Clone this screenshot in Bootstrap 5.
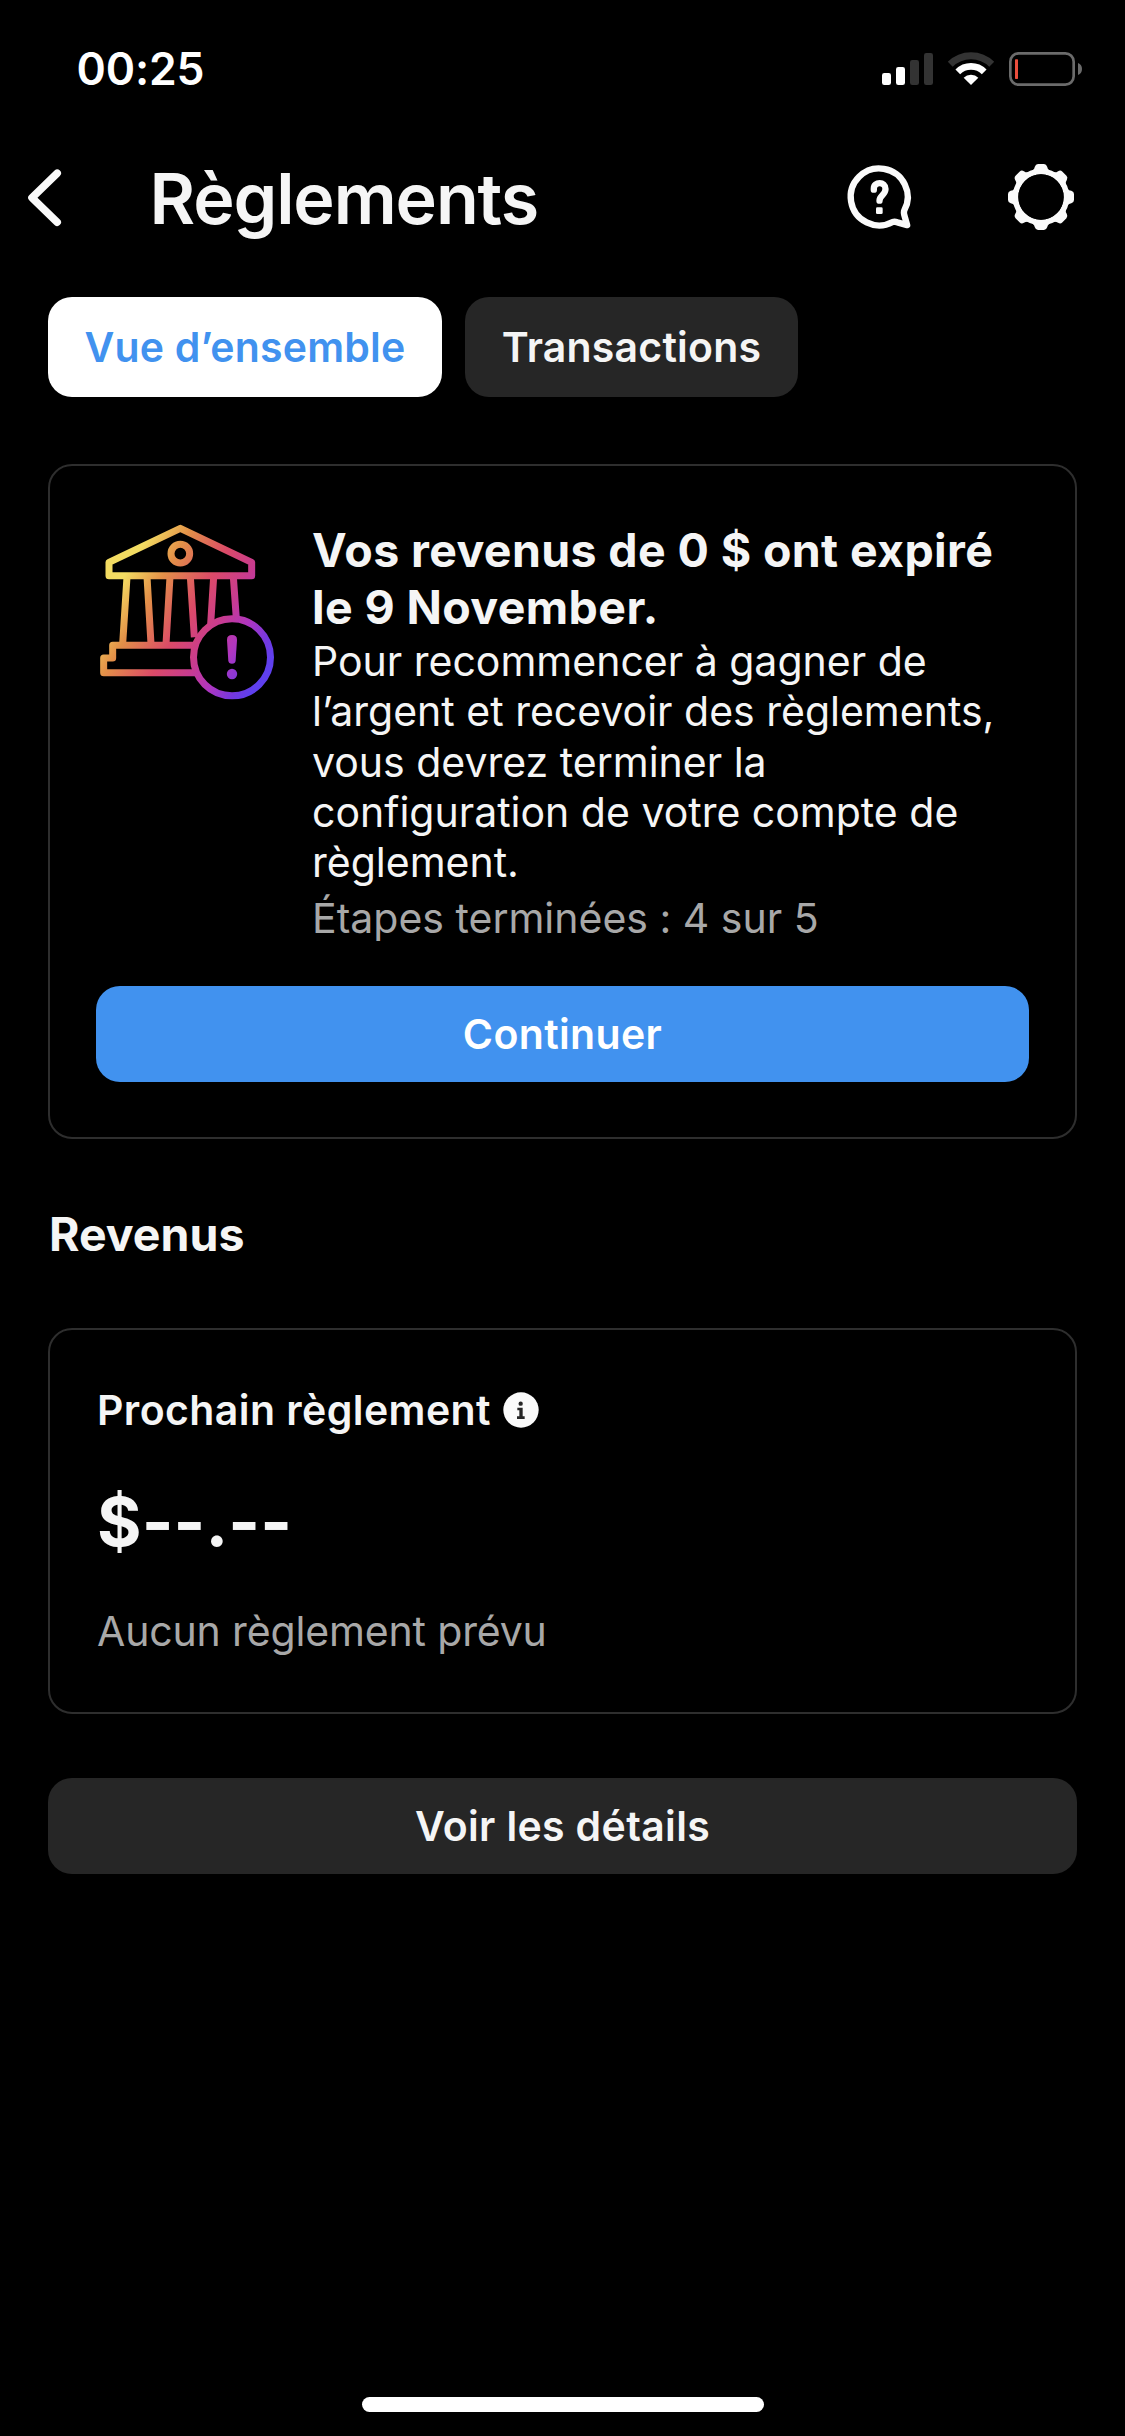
<!DOCTYPE html>
<html lang="fr" data-bs-theme="dark">
<head>
<meta charset="utf-8">
<meta name="viewport" content="width=device-width, initial-scale=1">
<title>Règlements</title>
<link href="https://cdn.jsdelivr.net/npm/bootstrap@5.3.0/dist/css/bootstrap.min.css" rel="stylesheet">
<style>
  body { background: #000; color: #f5f5f5; font-family: Inter, "Liberation Sans", sans-serif; font-size: 41px; line-height: 50.25px; font-feature-settings: "calt" 0; }
  h1, h2 { color: #f5f5f5; }
  svg { display: block; flex: none; }
  .screen { width: 1125px; height: 2436px; }
  .statusbar { height: 138px; padding: 0 43px 0 76.6px; }
  .clock { font-size: 44.5px; font-weight: 600; color: #fff; letter-spacing: -.16px; }
  .topbar { height: 120px; padding: 0 45px 0 24px; }
  .topbar h1 { font-size: 70px; line-height: 80px; font-weight: 600; letter-spacing: -1.1px; margin-left: 85.5px; padding-top: 2px; }
  .actions { gap: 80px; }
  .content { padding: 39px 48px 0; }
  .pills { gap: 23px; margin-bottom: 67px; }
  .pill { height: 100px; border-radius: 24px; font-size: 41px; font-weight: 600; line-height: 50px; padding: 0; border: 0; letter-spacing: .2px; }
  .pill-on, .pill-on:hover { width: 394px; background: #fff; color: #4192ef; }
  .pill-off, .pill-off:hover { width: 333px; background: #262626; color: #f5f5f5; }
  .panel { background: #000; border: 2px solid #2e2e2e; border-radius: 24px; color: #f5f5f5; }
  .panel-alert { height: 675px; padding: 56px 46px 0; }
  .panel-alert h2 { font-size: 46.5px; line-height: 57px; font-weight: 700; letter-spacing: .38px; white-space: nowrap; }
  .muted { color: #a8a8a8; }
  .steps { margin-top: 6px; }
  .wide-btn { height: 96px; border-radius: 24px; font-size: 41px; line-height: 50px; font-weight: 600; padding: 0; border: 0; letter-spacing: .35px; }
  .wide-blue, .wide-blue:hover { background: #4192ef; color: #fff; margin-top: 42.6px; }
  .wide-grey, .wide-grey:hover { background: #262626; color: #f5f5f5; margin-top: 64px; }
  .section-title { font-size: 46.5px; line-height: 56px; font-weight: 700; margin: 67px 0 66px 1px; }
  .panel-next { height: 386px; padding: 55px 46px 0; }
  .next-label { height: 50px; gap: 12px; font-weight: 600; letter-spacing: .42px; padding-left: 1px; }
  .amount { font-size: 68px; line-height: 80px; font-weight: 700; margin-top: 46px; padding-left: 1px; letter-spacing: .1px; }
  .next-note { margin-top: 45px; letter-spacing: -.15px; padding-left: 1px; }
  .home-bar { width: 402px; height: 15px; border-radius: 8px; background: #fff; margin-bottom: 24px; }
</style>
</head>
<body>
<div class="screen d-flex flex-column overflow-hidden">

  <div class="statusbar d-flex align-items-center justify-content-between">
    <span class="clock">00:25</span>
    <svg width="200" height="38" viewBox="246 90 600 114" aria-hidden="true">
      <rect x="246" y="159" width="27" height="36" rx="7" fill="#fff"/>
      <rect x="288" y="141" width="27" height="54" rx="7" fill="#fff"/>
      <rect x="330" y="120" width="27" height="75" rx="7" fill="#333"/>
      <rect x="372" y="99" width="27" height="96" rx="7" fill="#333"/>
      <path d="M450.8 132.8A88 88 0 0 1 575.2 132.8" fill="none" stroke="#333" stroke-width="21"/>
      <path d="M473.4 155.4A56 56 0 0 1 552.6 155.4" fill="none" stroke="#fff" stroke-width="20"/>
      <path d="M513 195L491 173Q500 164 513 164T535 173Z" fill="#fff"/>
      <rect x="631" y="100" width="190" height="94" rx="25" fill="none" stroke="#6b6b6b" stroke-width="8"/>
      <rect x="645" y="118" width="9" height="59" rx="2" fill="#eb4e3d"/>
      <path d="M834 129Q846 134 846 147T834 165Z" fill="#6b6b6b"/>
    </svg>
  </div>

  <header class="topbar d-flex align-items-center">
    <svg width="40" height="60" viewBox="24 168 40 60" fill="none" stroke="#fafafa" stroke-width="7.6" stroke-linecap="round" stroke-linejoin="round">
      <path d="M57.2 173.2L32 197.7L57.2 222.2"/>
    </svg>
    <h1 class="mb-0">Règlements</h1>
    <div class="actions d-flex ms-auto">
      <svg width="80" height="80" viewBox="0 0 240 240" fill="none" stroke="#fafafa" stroke-linejoin="round">
        <path d="M158 192A85.5 85.5 0 1 1 193 157Q190 164 194 175L201.500 201.500L172 193Q164 190 158 192Z" stroke-width="19"/>
        <path d="M101.500 95V92C101.500 70 136.500 70 136.500 93C136.500 111 118.500 112 118.500 128" stroke-width="19" stroke-linecap="round"/>
        <rect x="108" y="148" width="20" height="20" rx="4" fill="#fafafa" stroke="none"/>
      </svg>
      <svg width="80" height="80" viewBox="-123 -117 240 240" fill="#fafafa">
        <defs><path id="tooth" d="M-31 -72L-25 -80Q-20 -83 -18.500 -91Q-16 -99 -9 -99H9Q16 -99 18.500 -91Q20 -83 25 -80L31 -72Z"/></defs>
        <circle r="76.500" fill="none" stroke="#fafafa" stroke-width="17"/>
        <use href="#tooth"/><use href="#tooth" transform="rotate(45)"/><use href="#tooth" transform="rotate(90)"/><use href="#tooth" transform="rotate(135)"/>
        <use href="#tooth" transform="rotate(180)"/><use href="#tooth" transform="rotate(225)"/><use href="#tooth" transform="rotate(270)"/><use href="#tooth" transform="rotate(315)"/>
        <circle r="68" fill="#000"/>
      </svg>
    </div>
  </header>

  <main class="content">
    <div class="pills d-flex">
      <button type="button" class="btn pill pill-on">Vue d’ensemble</button>
      <button type="button" class="btn pill pill-off">Transactions</button>
    </div>

    <section class="card panel panel-alert">
      <div class="d-flex">
        <svg width="216" height="200" viewBox="48 66 648 600" fill="none" stroke="url(#glow)" stroke-width="21" stroke-linejoin="round">
          <defs>
            <linearGradient id="glow" gradientUnits="userSpaceOnUse" x1="100" y1="250" x2="548.500" y2="519">
              <stop offset=".03" stop-color="#f3dc62"/>
              <stop offset=".22" stop-color="#e39048"/>
              <stop offset=".46" stop-color="#db4a68"/>
              <stop offset=".64" stop-color="#c83b90"/>
              <stop offset=".78" stop-color="#b036c0"/>
              <stop offset=".92" stop-color="#7438e0"/>
              <stop offset="1" stop-color="#5f40ee"/>
            </linearGradient>
          </defs>
          <path d="M87 187L301 85L515 187V227H87Z"/>
          <circle cx="301" cy="161" r="28"/>
          <path d="M141 230L128 432M201 230L213 432M270 230L258 432M331 230L343 412M401 230L392 372M460 230L469 356"/>
          <path d="M346 436H98V474H71V518H350"/>
          <circle cx="456" cy="472" r="115.500"/>
          <path d="M441 419Q441 405 456 405T471 419L467 482Q466 491 456 491T445 482Z" fill="url(#glow)" stroke="none"/>
          <circle cx="456" cy="522" r="15.500" fill="url(#glow)" stroke="none"/>
        </svg>
        <div>
          <h2 class="mb-0">Vos revenus de 0 $ ont expiré<br>le 9 November.</h2>
          <p class="mb-0 text-nowrap">Pour recommencer à gagner de<br>l’argent et recevoir des règlements,<br>vous devrez terminer la<br>configuration de votre compte de<br>règlement.</p>
          <p class="steps muted mb-0">Étapes terminées : 4 sur 5</p>
        </div>
      </div>
      <button type="button" class="btn w-100 wide-btn wide-blue">Continuer</button>
    </section>

    <h2 class="section-title">Revenus</h2>

    <section class="card panel panel-next">
      <div class="next-label d-flex align-items-center">
        <span>Prochain règlement</span>
        <svg width="36" height="36" viewBox="-54 -54 108 108">
          <circle r="53" fill="#fafafa"/>
          <circle cx="-1" cy="-19" r="6.500" fill="#262626"/>
          <path d="M-11 -7H5V19H11V27H-12V19H-5V1H-11Z" fill="#262626"/>
        </svg>
      </div>
      <div class="amount">$--.--</div>
      <div class="next-note muted">Aucun règlement prévu</div>
    </section>

    <button type="button" class="btn w-100 wide-btn wide-grey">Voir les détails</button>
  </main>

  <div class="home-bar mt-auto mx-auto"></div>
</div>
<script src="https://cdn.jsdelivr.net/npm/bootstrap@5.3.0/dist/js/bootstrap.bundle.min.js"></script>
</body>
</html>
